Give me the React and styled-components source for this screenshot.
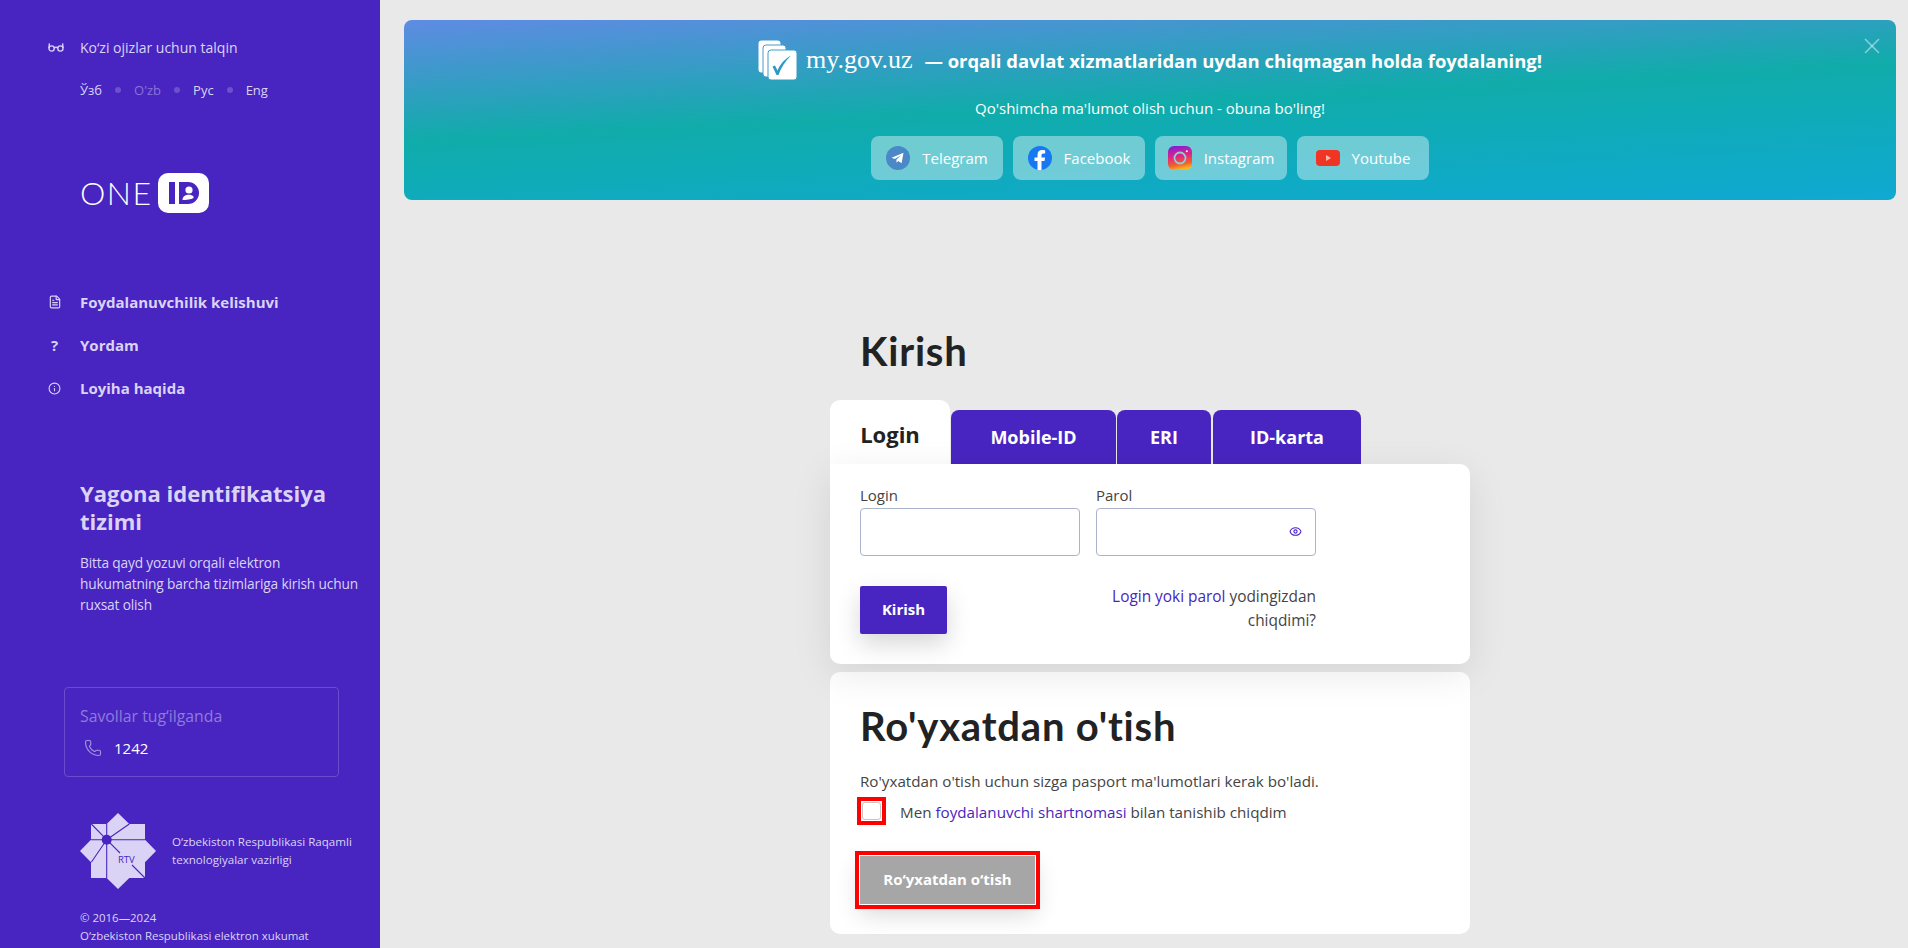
import React from "react";
import styled, { createGlobalStyle } from "styled-components";
import { FileText, Info, Phone, Eye, X } from "lucide-react";

const FONT = `"Open Sans", "Noto Sans", sans-serif`;
const PURPLE = "#4825c0";
const LAV = "#dbd3f6";

const Global = createGlobalStyle`
  html, body { margin: 0; padding: 0; height: 100%; overflow: hidden; background: #e9e9e9; }
  * { box-sizing: border-box; }
  body { font-family: ${FONT}; }
`;

const Page = styled.div`
  display: flex;
  height: 948px;
  overflow: hidden;
`;

/* ---------- sidebar ---------- */
const Sidebar = styled.aside`
  flex: 0 0 380px;
  height: 948px;
  overflow: hidden;
  background: ${PURPLE};
  color: ${LAV};
  padding: 37px 0 0 48px;
`;
const IconRow = styled.div`
  display: grid;
  grid-template-columns: 32px 1fr;
  align-items: center;
  height: 20px;
  font-size: ${p => p.$size || 14}px;
  font-weight: ${p => p.$bold ? 700 : 400};
  color: ${LAV};
`;
const Langs = styled.div`
  display: flex;
  align-items: center;
  gap: 13px;
  height: 20px;
  margin: 23px 0 0 32px;
  font-size: 13px;
`;
const Lang = styled.span`
  color: ${p => p.$muted ? "#8a72d8" : LAV};
`;
const LangDot = styled.i`
  width: 6px;
  height: 6px;
  border-radius: 50%;
  background: #6e50cf;
`;
const Logo = styled.div`
  display: flex;
  align-items: center;
  gap: 10px;
  height: 40px;
  margin: 73px 0 0 32px;
`;
const LogoWord = styled.span`
  font-family: Lato, sans-serif;
  font-weight: 300;
  font-size: 32px;
  letter-spacing: 1.5px;
  line-height: 40px;
  width: 68px;
  color: #fff;
`;
const Nav = styled.nav`
  display: flex;
  flex-direction: column;
  gap: 23px;
  margin-top: 79px;
`;
const NavGlyph = styled.span`
  font-size: 15px;
  font-weight: 700;
  padding-left: 3px;
`;
const Intro = styled.div`
  margin: 81px 0 0 32px;
`;
const IntroTitle = styled.h2`
  margin: 0;
  font-size: 22px;
  line-height: 28px;
  font-weight: 700;
  color: ${LAV};
`;
const IntroText = styled.p`
  margin: 17px 0 0;
  font-size: 13.7px;
  letter-spacing: -.15px;
  line-height: 21px;
  white-space: nowrap;
`;
const Help = styled.div`
  width: 275px;
  height: 90px;
  margin: 72px 0 0 16px;
  padding: 18px 15px;
  border: 1px solid #6a4ccd;
  border-radius: 4px;
`;
const HelpTitle = styled.div`
  font-size: 15.8px;
  line-height: 20px;
  color: #8f7bda;
`;
const HelpPhone = styled.div`
  display: flex;
  align-items: center;
  gap: 12px;
  height: 20px;
  margin-top: 12px;
  padding-left: 4px;
  font-size: 15px;
  color: #fff;
  svg { color: #a394e2; }
`;
const Ministry = styled.div`
  display: flex;
  align-items: center;
  gap: 16px;
  margin: 36px 0 0 32px;
`;
const MinistryText = styled.div`
  width: 190px;
  font-size: 11.6px;
  line-height: 18px;
  white-space: nowrap;
`;
const Copy = styled.div`
  margin: 20px 0 0 32px;
  font-size: 11.45px;
  line-height: 18px;
  white-space: nowrap;
`;

/* ---------- main ---------- */
const Main = styled.main`
  flex: 1;
  min-width: 0;
  padding: 20px 12px 0 24px;
`;
const Banner = styled.section`
  position: relative;
  height: 180px;
  padding-top: 20px;
  border-radius: 8px;
  color: #fff;
  background: linear-gradient(177deg, #5f8be3 0%, #10acaa 47%, #0fa9d3 100%);
  display: flex;
  flex-direction: column;
  align-items: center;
`;
const Close = styled.span`
  position: absolute;
  top: 13px;
  right: 11px;
  color: rgba(255, 255, 255, .45);
  line-height: 0;
`;
const BannerTitle = styled.div`
  display: flex;
  align-items: center;
  height: 40px;
  font-size: 18.45px;
  font-weight: 700;
  white-space: nowrap;
`;
const BrandName = styled.span`
  font-family: "Liberation Serif", serif;
  font-weight: 400;
  font-size: 26px;
  margin: 0 12px 0 9px;
`;
const BannerSub = styled.div`
  height: 20px;
  margin-top: 18px;
  font-size: 15px;
  line-height: 20px;
`;
const Socials = styled.div`
  display: flex;
  gap: 10px;
  margin-top: 18px;
`;
const Social = styled.a`
  display: flex;
  align-items: center;
  justify-content: center;
  gap: 12px;
  width: 132px;
  height: 44px;
  border-radius: 8px;
  background: rgba(255, 255, 255, .4);
  font-size: 15px;
  color: #fff;
`;
const Column = styled.div`
  width: 640px;
  margin: 0 auto;
`;
const PageTitle = styled.h1`
  margin: 127px 0 25px 30px;
  font-family: Lato, sans-serif;
  font-size: 40px;
  letter-spacing: .8px;
  line-height: 48px;
  font-weight: 700;
  color: #222;
`;
const Tabs = styled.div`
  display: flex;
  align-items: flex-end;
  gap: 1px;
`;
const Tab = styled.div`
  display: flex;
  align-items: center;
  justify-content: center;
  width: ${p => p.$w}px;
  height: ${p => p.$active ? 64 : 54}px;
  padding-top: ${p => p.$active ? 4 : 0}px;
  margin-right: ${p => p.$mr || 0}px;
  border-radius: ${p => p.$active ? "10px" : "8px"} ${p => p.$active ? "10px" : "8px"} 0 0;
  background: ${p => p.$active ? "#fff" : PURPLE};
  color: ${p => p.$active ? "#222" : "#fff"};
  font-size: ${p => p.$active ? 22 : 18}px;
  font-weight: 700;
`;
const Card = styled.section`
  position: relative;
  z-index: ${p => p.$raised ? 2 : 1};
  background: #fff;
  border-radius: ${p => p.$flatTop ? "0 10px 10px 10px" : "10px"};
  padding: ${p => p.$pad};
  margin-bottom: 8px;
  box-shadow: ${p => p.$raised ? "0 10px 40px rgba(0,0,0,.09)" : "none"};
`;
const Fields = styled.div`
  display: grid;
  grid-template-columns: 220px 220px;
  column-gap: 16px;
`;
const Label = styled.label`
  display: block;
  height: 22px;
  font-size: 15px;
  line-height: 18px;
  color: #444;
`;
const InputWrap = styled.div`
  position: relative;
`;
const Input = styled.input`
  display: block;
  width: 100%;
  height: 48px;
  border: 1px solid #adb3cb;
  border-radius: 4px;
  background: #fff;
  outline: none;
`;
const EyeSpot = styled.span`
  position: absolute;
  right: 14px;
  top: 17px;
  line-height: 0;
  color: ${PURPLE};
`;
const Actions = styled.div`
  display: flex;
  justify-content: space-between;
  align-items: flex-start;
  width: 456px;
  margin-top: 30px;
`;
const Button = styled.button`
  height: 48px;
  width: ${p => p.$w}px;
  border: 0;
  padding: 0 0 2px;
  border-radius: ${p => p.$off ? 0 : 2}px;
  color: #fff;
  font: 700 15px ${FONT};
  background: ${p => p.$off ? "#a6a6a6" : PURPLE};
  box-shadow: ${p => p.$off ? "0 0 0 1px #fff, " : ""}0 10px 24px rgba(0,0,0,.16);
  outline: ${p => p.$off ? "4px solid #f00" : "none"};
  outline-offset: 1px;
`;
const Forgot = styled.div`
  width: 210px;
  margin-top: -1px;
  text-align: right;
  font-size: 15.4px;
  line-height: 24px;
  color: #444;
`;
const Link = styled.a`
  color: ${PURPLE};
`;
const Heading = styled.h2`
  margin: 0;
  font-family: Lato, sans-serif;
  font-size: 40px;
  letter-spacing: .8px;
  line-height: 48px;
  font-weight: 700;
  color: #222;
  white-space: nowrap;
`;
const Body = styled.p`
  margin: 19px 0 0;
  font-size: 15.2px;
  line-height: 24px;
  color: #444;
  white-space: nowrap;
`;
const Agree = styled.div`
  display: flex;
  align-items: center;
  margin: 4px 0 31px -3px;
  font-size: 15.2px;
  color: #444;
  white-space: nowrap;
`;
const AgreeText = styled.span`
  padding-top: 2px;
`;
const CheckFrame = styled.span`
  display: block;
  width: 29px;
  height: 28px;
  padding: 1px;
  border: 4px solid #f00;
  margin-right: 14px;
`;
const CheckBox = styled.span`
  display: block;
  height: 100%;
  border: 1px solid #c6c6c6;
  border-radius: 3px;
  background: #fff;
`;

/* ---------- drawings ---------- */
const Glasses = () => (
  <svg width="16" height="12" viewBox="0 0 16 12" fill="none" stroke={LAV} strokeWidth="1.4">
    <circle cx="3.6" cy="7.5" r="2.6" />
    <circle cx="12.4" cy="7.5" r="2.6" />
    <path d="M6.2 7c1-.8 2.6-.8 3.6 0M1 7 1.4 2.4M15 7 14.6 2.4" />
  </svg>
);
const IdBadge = () => (
  <svg width="51" height="40" viewBox="0 0 51 40">
    <rect width="51" height="40" rx="10" fill="#fff" />
    <rect x="11" y="9" width="6" height="22" fill={PURPLE} />
    <path d="M21 9h9a11 11 0 0 1 0 22h-9z" fill={PURPLE} />
    <circle cx="31" cy="17" r="3.6" fill="#fff" />
    <path d="M24.5 27c.2-3.6 2.8-5.2 6.4-5.2 2 0 3.6.6 4.6 1.8v1.4c-1.600 1-4 1.800-11 2z" fill="#fff" />
  </svg>
);
const Star = () => (
  <svg width="76" height="76" viewBox="0 0 76 76">
    <path d="M38 0 49.300 11H65V26.700L76 38 65 49.300V65H49.300L38 76 26.700 65H11V49.300L0 38 11 26.700V11H26.700Z" fill="#dbd3f6" />
    <g stroke={PURPLE} strokeWidth="1.1" fill="none">
      <path d="M11 26.700H65M26.700 11V26.700M26.700 26.700V65M11.300 11 26.700 26.700M49.300 11 26.700 26.700M11.300 49.300 26.700 26.700M26.700 26.700 40 40M52 52 65 65" />
    </g>
    <circle cx="26.700" cy="26.700" r="5" fill={PURPLE} />
    <text x="38" y="50" fontFamily="Open Sans, sans-serif" fontSize="9.500" fill={PURPLE}>RTV</text>
  </svg>
);
const Cards = () => (
  <svg width="39" height="40" viewBox="0 0 39 40">
    <rect x=".5" y=".5" width="22" height="32" rx="3" fill="#fff" />
    <rect x="5" y="5" width="23" height="32" rx="3" fill="#fff" stroke="#4a9acb" strokeWidth="1" />
    <rect x="10" y="10" width="29" height="30" rx="3" fill="#fff" stroke="#3f9fc6" strokeWidth="1" />
    <path d="M14.500 26.500 17 25.500 19.500 30.500C22 24.500 26 19.500 33 15.500 27.500 21 23 27.500 20.500 35H18.500Z" fill="#2d9ac5" />
  </svg>
);
const Telegram = () => (
  <svg width="24" height="24" viewBox="0 0 24 24">
    <circle cx="12" cy="12" r="12" fill="#4a88c7" />
    <path d="M5.500 11.800 17.500 6.800 15.600 17.300 12.300 15 10.700 16.800 10.300 13.700 15 9.300 8.800 13Z" fill="#fff" />
  </svg>
);
const Facebook = () => (
  <svg width="24" height="24" viewBox="0 0 24 24">
    <circle cx="12" cy="12" r="12" fill="#1877f2" />
    <path d="M13.500 24v-9h3l.6-3.500h-3.600V9.400c0-1 .5-1.900 2-1.900h1.700V4.400s-1.500-.3-3-.3c-3 0-4.700 1.800-4.700 4.900v2.500H6.500V15h3v9z" fill="#fff" />
  </svg>
);
const Instagram = () => (
  <svg width="24" height="24" viewBox="0 0 24 24">
    <defs>
      <linearGradient id="ig" x1="0.200" y1="0" x2="0.400" y2="1">
        <stop offset="0" stopColor="#7d1ddb" />
        <stop offset=".45" stopColor="#e0257f" />
        <stop offset=".8" stopColor="#f2622b" />
        <stop offset="1" stopColor="#f7b81c" />
      </linearGradient>
    </defs>
    <rect width="24" height="24" rx="6" fill="url(#ig)" />
    <circle cx="12" cy="12" r="5.500" fill="none" stroke="#8fd0d8" strokeWidth="1.800" />
    <circle cx="18.800" cy="5.200" r="1" fill="#fff" />
  </svg>
);
const Youtube = () => (
  <svg width="24" height="24" viewBox="0 0 24 24">
    <rect y="4" width="24" height="16" rx="4" fill="#f03524" />
    <path d="M10 9l5 3-5 3z" fill="#f3b9a8" />
  </svg>
);

const SOCIALS = [
  ["Telegram", Telegram],
  ["Facebook", Facebook],
  ["Instagram", Instagram],
  ["Youtube", Youtube],
];

export default function App() {
  return (
    <Page>
      <Global />
      <Sidebar>
        <IconRow><Glasses /><span>Ko‘zi ojizlar uchun talqin</span></IconRow>
        <Langs>
          <Lang>Ўзб</Lang><LangDot />
          <Lang $muted>O'zb</Lang><LangDot />
          <Lang>Рус</Lang><LangDot />
          <Lang>Eng</Lang>
        </Langs>
        <Logo><LogoWord>ONE</LogoWord><IdBadge /></Logo>
        <Nav>
          <IconRow $size={15} $bold><FileText size={14} /><span>Foydalanuvchilik kelishuvi</span></IconRow>
          <IconRow $size={15} $bold><NavGlyph>?</NavGlyph><span>Yordam</span></IconRow>
          <IconRow $size={15} $bold><Info size={13} /><span>Loyiha haqida</span></IconRow>
        </Nav>
        <Intro>
          <IntroTitle>Yagona identifikatsiya<br />tizimi</IntroTitle>
          <IntroText>Bitta qayd yozuvi orqali elektron<br />hukumatning barcha tizimlariga kirish uchun<br />ruxsat olish</IntroText>
        </Intro>
        <Help>
          <HelpTitle>Savollar tug‘ilganda</HelpTitle>
          <HelpPhone><Phone size={18} strokeWidth={1.5} /><span>1242</span></HelpPhone>
        </Help>
        <Ministry>
          <Star />
          <MinistryText>O‘zbekiston Respublikasi Raqamli<br />texnologiyalar vazirligi</MinistryText>
        </Ministry>
        <Copy>© 2016—2024<br />O‘zbekiston Respublikasi elektron xukumat</Copy>
      </Sidebar>
      <Main>
        <Banner>
          <Close><X size={26} strokeWidth={1.6} /></Close>
          <BannerTitle>
            <Cards />
            <BrandName>my.gov.uz</BrandName>
            <span>— orqali davlat xizmatlaridan uydan chiqmagan holda foydalaning!</span>
          </BannerTitle>
          <BannerSub>Qo'shimcha ma'lumot olish uchun - obuna bo'ling!</BannerSub>
          <Socials>
            {SOCIALS.map(([name, Icon]) => (
              <Social key={name}><Icon /><span>{name}</span></Social>
            ))}
          </Socials>
        </Banner>
        <Column>
          <PageTitle>Kirish</PageTitle>
          <Tabs>
            <Tab $active $w={120}>Login</Tab>
            <Tab $w={165}>Mobile-ID</Tab>
            <Tab $w={94} $mr={1}>ERI</Tab>
            <Tab $w={148}>ID-karta</Tab>
          </Tabs>
          <Card $raised $flatTop $pad="22px 30px 30px">
            <Fields>
              <div>
                <Label>Login</Label>
                <Input />
              </div>
              <div>
                <Label>Parol</Label>
                <InputWrap>
                  <Input />
                  <EyeSpot><Eye size={13} strokeWidth={2} /></EyeSpot>
                </InputWrap>
              </div>
            </Fields>
            <Actions>
              <Button $w={87}>Kirish</Button>
              <Forgot><Link>Login yoki parol</Link> yodingizdan chiqdimi?</Forgot>
            </Actions>
          </Card>
          <Card $pad="30px">
            <Heading>Ro'yxatdan o'tish</Heading>
            <Body>Ro'yxatdan o'tish uchun sizga pasport ma'lumotlari kerak bo'ladi.</Body>
            <Agree>
              <CheckFrame><CheckBox /></CheckFrame>
              <AgreeText>Men <Link>foydalanuvchi shartnomasi</Link> bilan tanishib chiqdim</AgreeText>
            </Agree>
            <Button $off $w={175}>Ro‘yxatdan o‘tish</Button>
          </Card>
        </Column>
      </Main>
    </Page>
  );
}
